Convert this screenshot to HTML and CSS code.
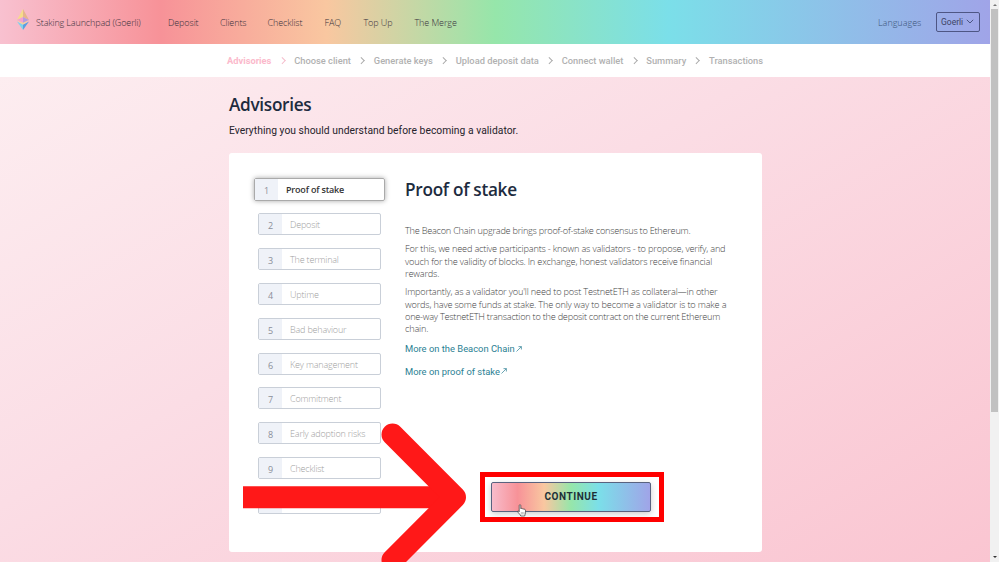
FILE: index.html
```html
<!DOCTYPE html>
<html lang="en">
<head>
<meta charset="utf-8">
<title>Staking Launchpad</title>
<link rel="stylesheet" href="styles.css">
</head>
<body>
<div class="app">
  <div class="page">
    <header class="topbar">
      <svg class="logo" width="12" height="21" viewBox="0 0 12 21">
        <path fill="#f6dc8a" d="M6 0 0 11l6-3z"/>
        <path fill="#e6b48c" d="M6 0l6 11-6-3z"/>
        <path fill="#f3a3d0" d="M0 11l6-3v6z"/>
        <path fill="#b79be0" d="M12 11 6 8v6z"/>
        <path fill="#f6dc8a" d="M0 11l6 3 6-3-6 4.500z"/>
        <path fill="#7fd4ea" d="M0 12.500l6 3.300V21z"/>
        <path fill="#5a9fe0" d="M12 12.500l-6 3.300V21z"/>
      </svg>
      <span class="brand">Staking Launchpad (Goerli)</span>
      <nav class="nav">
        <a class="n1">Deposit</a><a class="n2">Clients</a><a class="n3">Checklist</a><a class="n4">FAQ</a><a class="n5">Top Up</a><a class="n6">The Merge</a>
      </nav>
      <a class="languages">Languages</a>
      <div class="network">Goerli<svg width="8" height="5" viewBox="0 0 8 5"><path d="M.8.8 4 4 7.200.8" fill="none" stroke="#4c5580" stroke-width="1"/></svg></div>
    </header>
    <div class="steps">
      <span class="current">Advisories</span><i class="chev pink"></i>
      <span>Choose client</span><i class="chev"></i>
      <span>Generate keys</span><i class="chev"></i>
      <span>Upload deposit data</span><i class="chev"></i>
      <span>Connect wallet</span><i class="chev"></i>
      <span>Summary</span><i class="chev"></i>
      <span>Transactions</span>
    </div>
    <main class="content">
      <h1>Advisories</h1>
      <p class="lead">Everything you should understand before becoming a validator.</p>
      <section class="card">
        <ol class="menu">
          <li class="active"><b>1</b><span>Proof of stake</span></li>
          <li><b>2</b><span>Deposit</span></li>
          <li><b>3</b><span>The terminal</span></li>
          <li><b>4</b><span>Uptime</span></li>
          <li><b>5</b><span>Bad behaviour</span></li>
          <li><b>6</b><span>Key management</span></li>
          <li><b>7</b><span>Commitment</span></li>
          <li><b>8</b><span>Early adoption risks</span></li>
          <li><b>9</b><span>Checklist</span></li>
          <li><b></b><span></span></li>
        </ol>
        <article class="detail">
          <h2>Proof of stake</h2>
          <p class="tight">The Beacon Chain upgrade brings proof-of-stake consensus to Ethereum.</p>
          <p>For this, we need active participants - known as validators - to propose, verify, and<br>vouch for the validity of blocks. In exchange, honest validators receive financial<br>rewards.</p>
          <p>Importantly, as a validator you'll need to post TestnetETH as collateral—in other<br>words, have some funds at stake. The only way to become a validator is to make a<br><span class="tight">one-way TestnetETH transaction to the deposit contract on the current Ethereum</span><br>chain.</p>
          <a class="link">More on the Beacon Chain<svg width="6" height="6" viewBox="0 0 6 6"><path d="M.5 5.500 5.300.7M2.500.6h2.900v2.900" fill="none" stroke="#2b7f94" stroke-width=".7"/></svg></a>
          <a class="link">More on proof of stake<svg width="6" height="6" viewBox="0 0 6 6"><path d="M.5 5.500 5.300.7M2.500.6h2.900v2.900" fill="none" stroke="#2b7f94" stroke-width=".7"/></svg></a>
          <div class="highlight"><button>CONTINUE</button></div>
        </article>
      </section>
    </main>
  </div>
  <div class="scrollbar"><i class="up"></i><div class="thumb"></div><i class="down"></i></div>
  <svg class="arrow" width="230" height="142" viewBox="0 0 230 142">
    <path d="M3 77.300H210" fill="none" stroke="#ff1818" stroke-width="22"/>
    <path d="M152.500 14.500 215 77.300 152.500 140" fill="none" stroke="#ff1818" stroke-width="22" stroke-linecap="round" stroke-linejoin="round"/>
  </svg>
  <svg class="cursor" width="10" height="13" viewBox="0 0 10 13">
    <path d="M2.200 7.800V1.600c0-1.200 1.600-1.200 1.600 0v3.200c.3-.7 1.500-.6 1.600.2.400-.5 1.400-.3 1.500.4.600-.4 1.600 0 1.600.9v2.500c0 1.300-.8 1.800-.8 3.200H3.800C3.500 10.500 1.400 9.300.7 7.800c-.4-1 .8-1.300 1.500 0z" fill="#fff" stroke="#333" stroke-width=".7"/>
    <path d="M4.300 8v2.500M5.700 8v2.500M7 8v2.500" stroke="#555" stroke-width=".4"/>
  </svg>
</div>
</body>
</html>
```
FILE: styles.css
```css
* { box-sizing: border-box; }
body { margin: 0; font-family: "Open Sans", sans-serif; overflow: hidden; }
.app { position: relative; display: flex; width: 999px; height: 562px; overflow: hidden; }
.page { width: 990px; height: 562px; overflow: hidden; background: linear-gradient(to bottom right, #fdf0f2 0%, #fbdde5 45%, #fac5d1 100%); }
.topbar { height: 43.500px; display: flex; align-items: center; padding: 1px 10px 0 17px; font-size: 9px; font-weight: 300; color: #38323c; background: linear-gradient(to right, #f8c1d0 0%, #f79298 16.200%, #f9c7a0 33%, #96e6aa 50%, #7bdfe9 67.500%, #a0a4e8 100%); white-space: nowrap; }
.logo { margin: -5px 7px 0 0; flex: none; }
.brand { width: 132px; letter-spacing: -.13px; }
.nav { display: flex; flex: 1; letter-spacing: -.1px; }
.n1 { width: 52px; }
.n2 { width: 47.500px; }
.n3 { width: 57px; }
.n4 { width: 39px; }
.n5 { width: 51px; }
.languages { width: 58px; color: #3a5378; }
.network { width: 44px; height: 20px; margin-top: -1px; border: 1px solid #4e5684; border-radius: 2px; display: flex; align-items: center; gap: 3px; padding: 0 0 0 4px; font: 400 8.500px Roboto, sans-serif; color: #3d4365; }
.steps { height: 33.500px; padding-left: 227px; background: #fff; display: flex; align-items: center; font: 500 9.300px Roboto, sans-serif; color: #b1b1b1; white-space: nowrap; }
.steps .current { color: #fbb9cb; font-weight: 700; }
.chev { width: 4.500px; height: 4.500px; border: solid #aaa; border-width: 1px 1px 0 0; transform: rotate(45deg); margin: 0 10.200px 0 8.200px; }
.chev.pink { border-color: #f5bccb; }
.content { width: 533px; margin-left: 229px; }
h1, h2 { margin: 0; font-weight: 600; color: #1d2b3e; white-space: nowrap; }
h1 { padding-top: 16px; font-size: 17.200px; line-height: 24px; letter-spacing: -.3px; }
.lead { margin: 7px 0 0; font: 400 10.300px/14px Roboto, sans-serif; letter-spacing: .04px; color: #26232b; white-space: nowrap; }
.card { margin-top: 15px; width: 533px; height: 399px; background: #fff; border-radius: 3px; display: flex; padding: 25px 0 0 29px; }
.menu { list-style: none; margin: 0; padding: 0; width: 147px; }
.menu li { width: 123px; height: 22px; margin-bottom: 12.900px; border: 1px solid #c9cfd8; border-radius: 2px; display: flex; font-size: 9px; font-weight: 300; letter-spacing: -.18px; color: #a0a0a0; line-height: 21px; white-space: nowrap; }
.menu b { width: 23px; background: #eff2f8; font-weight: 400; color: #8b8f98; text-align: center; flex: none; line-height: 23px; }
.menu span { padding-left: 8px; }
.menu .active { width: 131px; height: 23px; margin: 0 0 12px -4px; border-color: #aaa; box-shadow: 0 0 5px rgba(0,0,0,.35); color: #333; font-weight: 600; }
.detail { width: 345px; }
h2 { font-size: 17.200px; line-height: 24px; margin-bottom: 23.200px; letter-spacing: -.28px; }
.detail p { margin: 0 0 5.900px; font-size: 9.200px; font-weight: 300; line-height: 12.350px; letter-spacing: -.18px; color: #454545; white-space: nowrap; }
.detail .tight { letter-spacing: -.25px; }
.link { display: flex; align-items: center; gap: 1px; height: 14px; margin-top: 5.700px; margin-bottom: 8.500px; font: 400 9.400px Roboto, sans-serif; color: #2b7f94; }
.link + .link { margin-top: 8px; }
.highlight { width: 184px; height: 50px; margin: 93.700px 0 0 75px; border: 5px solid #f00; display: flex; align-items: center; justify-content: center; padding-right: 2px; }
button { width: 160px; height: 30px; padding: 0; border: 1px solid #59627f; border-radius: 2px; font: 700 10px Roboto, sans-serif; letter-spacing: .55px; color: #203038; background: linear-gradient(to right, #f8bccb 0%, #f79298 16.200%, #f9c7a0 33%, #96e6aa 50%, #7bdfe9 67.500%, #a0a4e8 100%); box-shadow: 0 2px 6px rgba(0,0,0,.2); }
.scrollbar { width: 9px; background: #f1f1f1; display: flex; flex-direction: column; align-items: center; }
.up, .down { border: solid transparent; border-width: 0 2px; }
.up { margin: 4px 0 3px; border-bottom: 2px solid #777; }
.thumb { width: 7px; height: 403px; background: #c1c1c1; }
.down { margin-top: auto; margin-bottom: 4px; border-top: 2px solid #333; }
.arrow { position: absolute; left: 240px; top: 420px; }
.cursor { position: absolute; left: 517px; top: 504px; }
```
